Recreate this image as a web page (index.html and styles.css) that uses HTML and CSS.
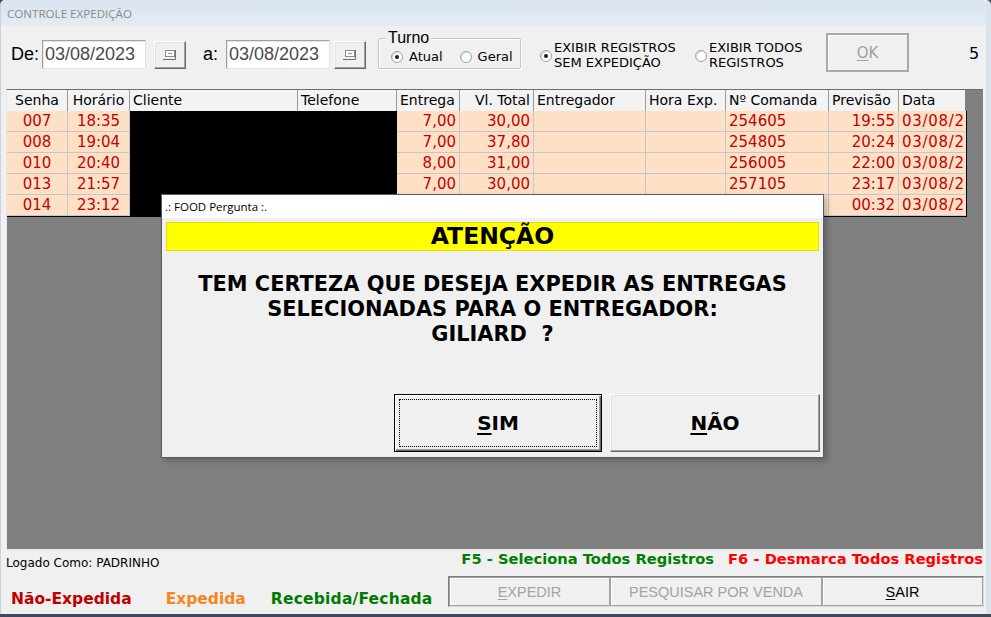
FILE: index.html
```html
<!DOCTYPE html>
<html lang="pt">
<head>
<meta charset="utf-8">
<title>CONTROLE EXPEDIÇÃO</title>
<link rel="stylesheet" href="styles.css">
</head>
<body>
<div class="window">
  <div class="titlebar"><span class="title">CONTROLE EXPEDIÇÃO</span></div>

  <div class="toolbar">
    <span class="lbl lbl-de">De:</span>
    <div class="datebox">03/08/2023</div>
    <button class="calbtn cal1" type="button">
      <svg width="16" height="12" viewBox="0 0 16 12"><rect x="3.5" y="1.5" width="9" height="6" fill="#fff" stroke="#8c8c8c"/><rect x="6" y="4" width="4" height="1" fill="#8c8c8c"/><path d="M1 10.5H13.5V1" fill="none" stroke="#6e6e6e"/></svg>
    </button>
    <span class="lbl lbl-a">a:</span>
    <div class="datebox">03/08/2023</div>
    <button class="calbtn cal2" type="button">
      <svg width="16" height="12" viewBox="0 0 16 12"><rect x="3.5" y="1.5" width="9" height="6" fill="#fff" stroke="#8c8c8c"/><rect x="6" y="4" width="4" height="1" fill="#8c8c8c"/><path d="M1 10.5H13.5V1" fill="none" stroke="#6e6e6e"/></svg>
    </button>

    <div class="turno">
      <span class="turno-legend">Turno</span>
      <div class="turno-opts">
        <span class="ropt"><span class="radio on"></span>Atual</span>
        <span class="ropt"><span class="radio"></span>Geral</span>
      </div>
    </div>

    <div class="opt opt1"><span class="radio on"></span><span class="opt-text">EXIBIR REGISTROS<br>SEM EXPEDIÇÃO</span></div>
    <div class="opt opt2"><span class="radio"></span><span class="opt-text">EXIBIR TODOS<br>REGISTROS</span></div>

    <button class="okbtn" type="button"><u>O</u>K</button>
    <span class="count">5</span>
  </div>

  <div class="grid">
    <div class="row head">
      <div class="c ctr">Senha</div>
      <div class="c ctr">Horário</div>
      <div class="c">Cliente</div>
      <div class="c">Telefone</div>
      <div class="c">Entrega</div>
      <div class="c rgt">Vl. Total</div>
      <div class="c">Entregador</div>
      <div class="c">Hora Exp.</div>
      <div class="c">Nº Comanda</div>
      <div class="c">Previsão</div>
      <div class="c last">Data</div>
    </div>
    <div class="rows">
      <div class="row">
        <div class="c ctr">007</div><div class="c ctr">18:35</div><div class="c blk"></div><div class="c blk"></div>
        <div class="c rgt">7,00</div><div class="c rgt">30,00</div><div class="c"></div><div class="c"></div>
        <div class="c">254605</div><div class="c rgt">19:55</div><div class="c last">03/08/2023</div>
      </div>
      <div class="row">
        <div class="c ctr">008</div><div class="c ctr">19:04</div><div class="c blk"></div><div class="c blk"></div>
        <div class="c rgt">7,00</div><div class="c rgt">37,80</div><div class="c"></div><div class="c"></div>
        <div class="c">254805</div><div class="c rgt">20:24</div><div class="c last">03/08/2023</div>
      </div>
      <div class="row">
        <div class="c ctr">010</div><div class="c ctr">20:40</div><div class="c blk"></div><div class="c blk"></div>
        <div class="c rgt">8,00</div><div class="c rgt">31,00</div><div class="c"></div><div class="c"></div>
        <div class="c">256005</div><div class="c rgt">22:00</div><div class="c last">03/08/2023</div>
      </div>
      <div class="row">
        <div class="c ctr">013</div><div class="c ctr">21:57</div><div class="c blk"></div><div class="c blk"></div>
        <div class="c rgt">7,00</div><div class="c rgt">30,00</div><div class="c"></div><div class="c"></div>
        <div class="c">257105</div><div class="c rgt">23:17</div><div class="c last">03/08/2023</div>
      </div>
      <div class="row">
        <div class="c ctr">014</div><div class="c ctr">23:12</div><div class="c blk"></div><div class="c blk"></div>
        <div class="c rgt">7,00</div><div class="c rgt">30,00</div><div class="c"></div><div class="c"></div>
        <div class="c">258405</div><div class="c rgt">00:32</div><div class="c last">03/08/2023</div>
      </div>
    </div>
  </div>

  <div class="status">
    <span class="logado">Logado Como: PADRINHO</span>
    <span class="hint hint-f5">F5 - Seleciona Todos Registros</span>
    <span class="hint hint-f6">F6 - Desmarca Todos Registros</span>
  </div>

  <div class="bottom">
    <span class="legend leg-nao">Não-Expedida</span>
    <span class="legend leg-exp">Expedida</span>
    <span class="legend leg-rec">Recebida/Fechada</span>
    <div class="actions">
      <button class="act act-exp" type="button" disabled><u>E</u>XPEDIR</button>
      <button class="act act-pesq" type="button" disabled>PESQUISAR POR VENDA</button>
      <button class="act act-sair" type="button"><u>S</u>AIR</button>
    </div>
  </div>

  <div class="dialog">
    <div class="dlg-title">.: FOOD Pergunta :.</div>
    <div class="banner">ATENÇÃO</div>
    <div class="msg">TEM CERTEZA QUE DESEJA EXPEDIR AS ENTREGAS<br>SELECIONADAS PARA O ENTREGADOR:<br>GILIARD&nbsp; ?</div>
    <div class="dlg-btns">
      <button class="dbtn dbtn-sim" type="button"><span class="focus"><u>S</u>IM</span></button>
      <button class="dbtn dbtn-nao" type="button"><u>N</u>ÃO</button>
    </div>
  </div>
</div>
</body>
</html>
```

FILE: styles.css
```css
* { box-sizing: border-box; }
html, body { margin: 0; padding: 0; }
body {
  width: 991px;
  height: 617px;
  overflow: hidden;
  background: #3d4a5a;
  font-family: "DejaVu Sans", Verdana, sans-serif;
}
.window {
  position: relative;
  width: 991px;
  height: 614px;
  background: #f0f0f0;
  border-left: 1px solid #c9d3df;
  border-right: 5px solid #dbe3ec;
  border-radius: 5px 5px 0 0;
  display: flex;
  flex-direction: column;
}

/* title bar */
.titlebar {
  height: 26px;
  flex: none;
  background: linear-gradient(#dae4ef, #e4ebf3);
  border-radius: 5px 5px 0 0;
  padding-left: 6px;
  display: flex;
  align-items: center;
}
.title {
  font-family: "Open Sans", "Noto Sans", sans-serif;
  font-size: 11.6px;
  color: #8a8a8a;
}

/* toolbar */
.toolbar {
  height: 63px;
  flex: none;
  display: flex;
  align-items: flex-start;
  padding-left: 10px;
  white-space: nowrap;
}
.lbl {
  font-family: "Liberation Sans", Arial, sans-serif;
  font-size: 18px;
  color: #000;
  margin-top: 18px;
  line-height: 20px;
}
.lbl-de { width: 31px; }
.lbl-a { width: 23px; margin-left: 17px; }
.datebox {
  width: 104px;
  height: 29px;
  margin-top: 14px;
  background: #fff;
  border: 1px solid;
  border-color: #a0a0a0 #e3e3e3 #e3e3e3 #a0a0a0;
  box-shadow: inset 1px 1px 0 #e8e8e8;
  font-family: "Liberation Sans", Arial, sans-serif;
  font-size: 18px;
  color: #4a4a4a;
  padding: 3px 0 0 2px;
  line-height: 21px;
}
.calbtn {
  width: 32px;
  height: 28px;
  margin-top: 15px;
  padding: 0;
  background: #f0f0f0;
  border: 1px solid;
  border-color: #fff #6b6b6b #6b6b6b #fff;
  box-shadow: inset -1px -1px 0 #a0a0a0, inset 1px 1px 0 #e3e3e3;
  display: flex;
  align-items: center;
  justify-content: center;
}
.cal1 { margin-left: 8px; }
.cal2 { margin-left: 4px; }

.turno {
  position: relative;
  width: 143px;
  height: 31px;
  margin-top: 12px;
  margin-left: 12px;
  border: 1px solid #c4c4c4;
  border-radius: 2px;
  box-shadow: 1px 1px 0 #fff, inset 1px 1px 0 #fff;
}
.turno-legend {
  position: absolute;
  left: 7px;
  top: -10px;
  padding: 0 2px;
  background: #f0f0f0;
  font-family: "Liberation Sans", Arial, sans-serif;
  font-size: 16px;
  line-height: 17px;
  color: #000;
}
.turno-opts {
  display: flex;
  gap: 17px;
  padding: 10px 0 0 12px;
}
.ropt {
  display: flex;
  align-items: center;
  gap: 6px;
  font-size: 13px;
  line-height: 15px;
  color: #000;
}
.radio {
  width: 12px;
  height: 12px;
  flex: none;
  border-radius: 50%;
  background: #fff;
  border: 1px solid #a0a0a0;
  box-shadow: inset 1px 1px 0 #dcdcdc;
  position: relative;
}
.radio.on::after {
  content: "";
  position: absolute;
  left: 3px;
  top: 3px;
  width: 4px;
  height: 4px;
  border-radius: 50%;
  background: #1a1a1a;
}
.opt {
  display: flex;
  align-items: center;
  gap: 1px;
  margin-top: 14px;
  font-size: 13px;
  line-height: 15px;
  color: #000;
}
.opt .radio { margin-top: 1px; }
.opt1 { margin-left: 19px; width: 155px; }
.opt2 { width: 131px; }
.opt-text { padding-left: 1px; white-space: nowrap; }
.okbtn {
  width: 83px;
  height: 39px;
  margin-top: 7px;
  background: #f0f0f0;
  border: 2px solid #a9a9a9;
  box-shadow: inset 1px 1px 0 #fff;
  font-family: "DejaVu Sans", sans-serif;
  font-size: 15px;
  color: #a0a0a0;
  padding: 0;
}
.okbtn u { text-decoration-thickness: 1px; text-underline-offset: 2px; }
.count {
  margin-left: 60px;
  margin-top: 19px;
  font-family: "DejaVu Sans", sans-serif;
  font-size: 16px;
  line-height: 18px;
  color: #000;
}

/* grid */
.grid {
  flex: none;
  width: 977px;
  height: 461px;
  margin-left: 5px;
  background: #808080;
  border-top: 1px solid #6f6f6f;
  border-left: 1px solid #e8e8e8;
  border-bottom: 1px solid #e8e8e8;
  overflow: hidden;
}
.row {
  display: grid;
  grid-template-columns: 61px 62px 168px 99px 63px 74px 112px 80px 103px 70px 66px;
  height: 21px;
}
.c {
  border-right: 1px solid #c6c6c6;
  border-bottom: 1px solid #c6c6c6;
  padding: 0 3px;
  white-space: nowrap;
  overflow: hidden;
  line-height: 20px;
}
.c.last { border-right: none; }
.ctr { text-align: center; }
.rgt { text-align: right; }
.head .c {
  background: #f3f3f3;
  font-size: 14px;
  color: #000;
  border-right: 1px solid #9a9a9a;
  border-bottom: none;
  line-height: 21px;
}
.head .c.last { border-right: none; }
.head { width: 959px; }
.rows {
  width: 960px;
  border-right: 1px solid #000;
  border-bottom: 1px solid #000;
}
.rows .row { background: #fde0c6; }
.rows .c {
  font-size: 15px;
  color: #c40000;
}
.rows .c.last { letter-spacing: 0.7px; }
.rows .c.blk {
  background: #000;
  border-color: #000;
}

/* status */
.status {
  flex: none;
  height: 24px;
  display: flex;
  align-items: flex-start;
  padding-left: 5px;
  padding-top: 3px;
}
.logado {
  font-size: 12px;
  line-height: 14px;
  color: #000;
  margin-top: 3px;
}
.hint {
  font-weight: bold;
  font-size: 14.7px;
  line-height: 17px;
  margin-top: -3px;
}
.hint-f5 { color: #008000; margin-left: auto; }
.hint-f6 { color: #ff0000; margin-left: 14px; margin-right: 3px; }

/* bottom */
.bottom {
  flex: 1;
  display: flex;
  align-items: flex-start;
  padding-left: 10px;
}
.legend {
  font-weight: bold;
  font-size: 15.5px;
  line-height: 18px;
  margin-top: 16px;
}
.leg-nao { color: #c00000; }
.leg-exp { color: #f5861f; margin-left: 34px; }
.leg-rec { color: #007a00; margin-left: 25px; letter-spacing: 0.2px; }
.actions {
  margin-left: auto;
  margin-right: 2px;
  margin-top: 2px;
  display: flex;
  border: 1px solid #7d7d7d;
  border-right-color: #d9d9d9;
  border-bottom-color: #d9d9d9;
}
.act {
  height: 29px;
  background: #f0f0f0;
  border: 1px solid #a3a3a3;
  box-shadow: inset 1px 1px 0 #fff;
  font-family: "Liberation Sans", Arial, sans-serif;
  font-size: 14.5px;
  color: #a3a3a3;
  padding: 0;
}
.act u { text-underline-offset: 2px; }
.act-exp { width: 161px; }
.act-pesq { width: 212px; }
.act-sair { width: 161px; color: #000; }

/* dialog */
.dialog {
  position: absolute;
  left: 160px;
  top: 194px;
  width: 663px;
  height: 264px;
  background: #f0f0f0;
  border: 1px solid #5c5c5c;
  box-shadow: 3px 3px 6px rgba(0,0,0,0.25);
  display: flex;
  flex-direction: column;
}
.dlg-title {
  height: 23px;
  background: #fff;
  font-family: "Open Sans", "Noto Sans", sans-serif;
  font-size: 11.5px;
  line-height: 23px;
  color: #000;
  padding-left: 3px;
}
.banner {
  margin: 4px 4px 0 4px;
  height: 29px;
  background: #ffff00;
  border: 1px solid #e2e200;
  text-align: center;
  font-weight: bold;
  font-size: 23.5px;
  line-height: 27px;
  color: #000;
}
.msg {
  margin-top: 21px;
  text-align: center;
  font-weight: bold;
  font-size: 20.9px;
  line-height: 25px;
  color: #000;
}
.dlg-btns {
  margin-top: auto;
  margin-bottom: 5px;
  display: flex;
  justify-content: flex-end;
  gap: 8px;
  padding-right: 3px;
}
.dbtn {
  height: 58px;
  background: #f0f0f0;
  font-family: "DejaVu Sans", sans-serif;
  font-weight: bold;
  font-size: 20px;
  color: #000;
  padding: 0;
}
.dbtn u { text-decoration-thickness: 2px; text-underline-offset: 3px; }
.dbtn-sim {
  width: 208px;
  border: 1px solid #000;
  box-shadow: inset 1px 1px 0 #fff, inset -1px -1px 0 #696969, inset -2px -2px 0 #a0a0a0;
  padding: 4px;
}
.dbtn-sim .focus {
  display: flex;
  align-items: center;
  justify-content: center;
  width: 100%;
  height: 100%;
  border: 1px dotted #000;
}
.dbtn-nao {
  width: 210px;
  border: 1px solid;
  border-color: #fff #696969 #696969 #fff;
  box-shadow: inset -1px -1px 0 #a0a0a0, inset 1px 1px 0 #e3e3e3;
}
```
